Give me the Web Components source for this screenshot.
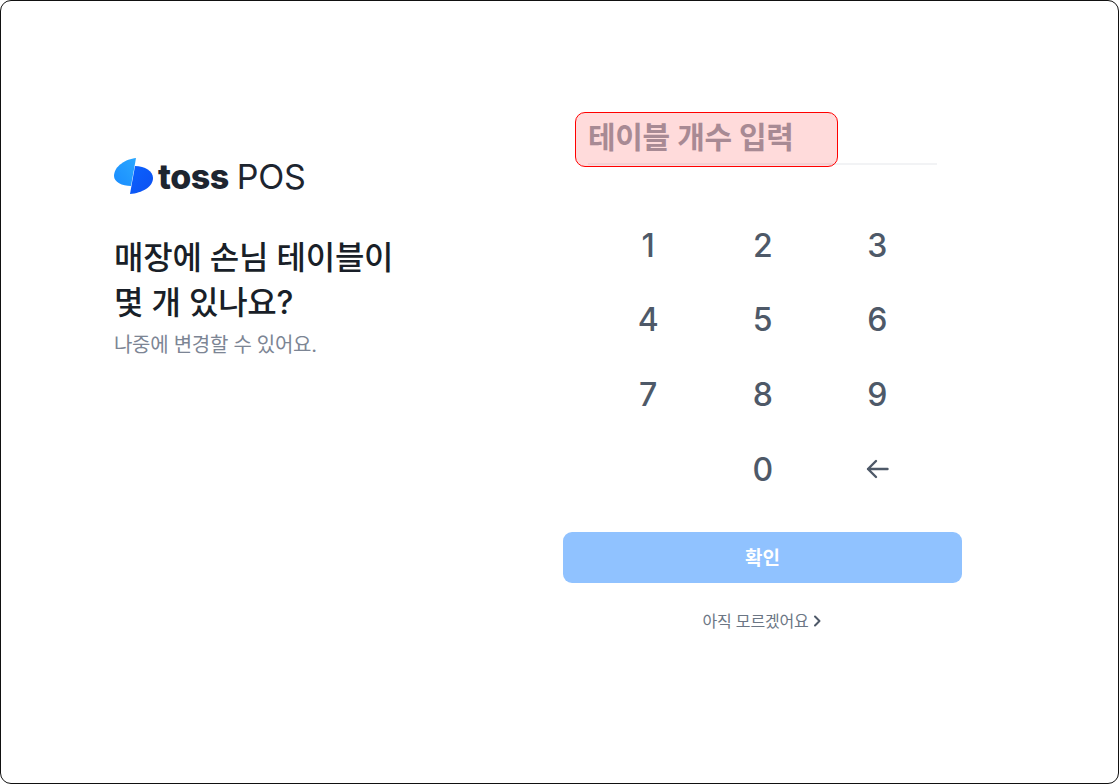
<!DOCTYPE html>
<html lang="ko">
<head>
<meta charset="utf-8">
<title>toss POS</title>
<style>
  html, body { margin: 0; height: 100%; background: #fff; }
  body { font-family: "Inter", "Noto Sans CJK KR", sans-serif; }
</style>
</head>
<body>
<pos-frame>
  <pos-intro slot="left"></pos-intro>
  <table-form slot="right"></table-form>
</pos-frame>

<script>
const FONT = '"Inter", "Noto Sans CJK KR", sans-serif';

class PosFrame extends HTMLElement {
  constructor() {
    super();
    this.attachShadow({ mode: "open" });
    this.shadowRoot.innerHTML = `
    <style>
      :host {
        display: flex;
        width: 1119px;
        height: 784px;
        box-sizing: border-box;
        border: 1px solid #111;
        border-radius: 11px;
        overflow: hidden;
        background: #fff;
      }
      .left { width: 449px; padding: 155px 0 0 113px; box-sizing: border-box; flex: none; }
      .right { flex: 1; padding: 111px 0 0 113px; box-sizing: border-box; }
    </style>
    <div class="left"><slot name="left"></slot></div>
    <div class="right"><slot name="right"></slot></div>
    `;
  }
}

class PosIntro extends HTMLElement {
  constructor() {
    super();
    this.attachShadow({ mode: "open" });
    this.shadowRoot.innerHTML = `
    <style>
      :host { display: block; font-family: ${FONT}; }
      .logo { display: flex; align-items: center; height: 40px; }
      .logo svg { flex: none; width: 40px; height: 36px; margin-right: 4px; }
      .toss { font-size: 34px; font-weight: 800; color: #1d2530; letter-spacing: -0.5px; }
      .pos { font-size: 34px; font-weight: 400; color: #1d2530; margin-left: 8px; letter-spacing: -0.2px; }
      h1 {
        margin: 39px 0 0;
        font-size: 32px;
        line-height: 45px;
        font-weight: 500;
        color: #191f28;
        letter-spacing: -0.25px;
      }
      p { margin: 5px 0 0; font-size: 20px; line-height: 30px; color: #7c8594; letter-spacing: -0.28px; }
    </style>
    <div class="logo">
      <svg viewBox="0 0 40 36">
        <defs>
          <linearGradient id="a" x1="0" y1="1" x2="1" y2="0">
            <stop offset="0" stop-color="#1a8cff"/><stop offset="1" stop-color="#2aa8ff"/>
          </linearGradient>
          <linearGradient id="b" x1="0" y1="0" x2="1" y2="1">
            <stop offset="0" stop-color="#0a62ff"/><stop offset="1" stop-color="#0d50f0"/>
          </linearGradient>
        </defs>
        <path d="M22 0 C12 1 0 8 0 18 C0 24 8 28 17 28 Z" fill="url(#a)"/>
        <path d="M21 8 C31 8 39 13 39 20 C39 29 28 35 16 36 Z" fill="url(#b)"/>
      </svg>
      <span class="toss">toss</span><span class="pos">POS</span>
    </div>
    <h1>매장에 손님 테이블이<br>몇 개 있나요?</h1>
    <p>나중에 변경할 수 있어요.</p>
    `;
  }
}

class NumberPad extends HTMLElement {
  constructor() {
    super();
    this.attachShadow({ mode: "open" });
    const keys = ["1", "2", "3", "4", "5", "6", "7", "8", "9", "", "0", "back"];
    const cells = keys.map((k) => {
      if (k === "back") {
        return `<button aria-label="지우기"><svg width="24" height="24" viewBox="0 0 24 24" fill="none" stroke="#4e5968" stroke-width="2.400" stroke-linecap="round" stroke-linejoin="round"><path d="M3 12H22.500M11 4 3 12l8 8"/></svg></button>`;
      }
      return k ? `<button>${k}</button>` : `<span></span>`;
    });
    this.shadowRoot.innerHTML = `
    <style>
      :host {
        display: grid;
        grid-template-columns: repeat(3, 114.5px);
        grid-auto-rows: 74.6px;
        font-family: ${FONT};
      }
      button {
        background: none;
        border: 0;
        padding: 0;
        font: inherit;
        font-size: 32px;
        font-weight: 500;
        color: #4e5968;
        display: flex;
        align-items: center;
        justify-content: center;
      }
    </style>
    ${cells.join("")}
    `;
  }
}

class TableForm extends HTMLElement {
  constructor() {
    super();
    this.attachShadow({ mode: "open" });
    this.shadowRoot.innerHTML = `
    <style>
      :host { display: block; width: 399px; font-family: ${FONT}; position: relative; }
      .field {
        margin: 0 25px;
        height: 53px;
        box-sizing: border-box;
        border-bottom: 2px solid #f2f3f5;
        font-size: 30px;
        line-height: 51px;
        font-weight: 600;
        color: #9aa1ad;
        letter-spacing: -0.3px;
      }
      .mark {
        position: absolute;
        left: 12px;
        top: 0;
        width: 263px;
        height: 55px;
        box-sizing: border-box;
        border: 1px solid #f00;
        border-radius: 10px;
        background: rgba(255, 0, 0, 0.14);
      }
      number-pad { margin: 43px 0 0 28px; }
      .ok {
        display: block;
        width: 399px;
        height: 51px;
        margin-top: 26px;
        padding: 0 0 2px;
        border: 0;
        border-radius: 9px;
        background: #90c2ff;
        color: #fff;
        font: inherit;
        font-size: 19px;
        font-weight: 700;
      }
      .later {
        display: flex;
        justify-content: center;
        align-items: center;
        gap: 4px;
        margin-top: 26px;
        font-size: 16px;
        line-height: 24px;
        color: #6b7684;
        letter-spacing: -0.2px;
      }
    </style>
    <div class="field">테이블 개수 입력</div>
    <div class="mark"></div>
    <number-pad></number-pad>
    <button class="ok">확인</button>
    <div class="later">아직 모르겠어요
      <svg width="10" height="14" viewBox="0 0 10 14" fill="none" stroke="#4e5968" stroke-width="2" stroke-linecap="round" stroke-linejoin="round"><path d="M3 2.500 7.500 7 3 11.500"/></svg>
    </div>
    `;
  }
}

customElements.define("pos-frame", PosFrame);
customElements.define("pos-intro", PosIntro);
customElements.define("number-pad", NumberPad);
customElements.define("table-form", TableForm);
</script>
</body>
</html>
